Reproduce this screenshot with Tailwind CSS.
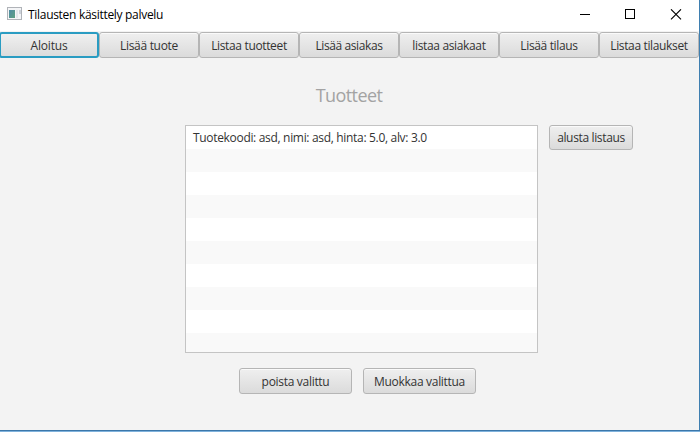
<!DOCTYPE html>
<html lang="fi">
<head>
<meta charset="utf-8">
<title>Tilausten käsittely palvelu</title>
<script src="https://cdn.jsdelivr.net/npm/@tailwindcss/browser@4"></script>
</head>
<body class="w-[700px] h-[432px] overflow-hidden bg-[#f3f3f3] font-['Open_Sans','Noto_Sans',sans-serif] text-[12px] text-[#333333]">
<div class="flex flex-col w-[700px] h-[432px] overflow-hidden">
  <div class="flex flex-1 min-h-0 w-full">
    <div class="flex flex-col w-[699px] shrink-0 overflow-hidden">
      <header class="flex h-[31px] shrink-0 bg-white items-center pl-[7px] text-black">
        <svg class="shrink-0 -mt-[3px]" width="16" height="14" viewBox="0 0 16 14">
          <defs><linearGradient id="g" x2="1" y2="1"><stop stop-color="#4f8ba5"/><stop offset="1" stop-color="#5da181"/></linearGradient></defs>
          <rect x=".5" y=".5" width="14" height="12" fill="#f4f5f7" stroke="#b0b3b8"/>
          <rect x="2" y="3" width="6" height="8" fill="url(#g)"/>
          <rect x="9" y="3" width="2" height="8" fill="#e3e7eb"/>
          <rect x="12" y="3" width="2" height="4" fill="#cdd2d9"/>
        </svg>
        <span class="ml-[5px] -mt-[2px] whitespace-nowrap tracking-[-0.3px]">Tilausten käsittely palvelu</span>
        <svg class="ml-auto mr-[16px] -mt-[2px] shrink-0" width="104" height="12" viewBox="0 0 104 12" fill="none" stroke="#000">
          <path d="M1 5.5H11M46.5 .5h9v9h-9z" shape-rendering="crispEdges"/>
          <path d="M92 .3l10 10M102 .3L92 10.3" stroke-width="1.1"/>
        </svg>
      </header>
      <nav class="flex -ml-px pt-px h-[27px] w-[700px] shrink-0">
        <button class="w-[100px] h-[26px] pt-px rounded-[3px] border-2 border-[#2a9cc2] bg-linear-to-b from-[#f0f0f0] to-[#dcdcdc] leading-[21px] tracking-[-0.2px] whitespace-nowrap">Aloitus</button>
        <button class="w-[100px] h-[26px] pt-px rounded-[3px] border border-[#b5b5b5] bg-linear-to-b from-[#efefef] to-[#dbdbdb] shadow-[inset_0_1px_0_#fafafa] leading-[23px] tracking-[-0.3px] whitespace-nowrap">Lisää tuote</button>
        <button class="w-[100px] h-[26px] pt-px rounded-[3px] border border-[#b5b5b5] bg-linear-to-b from-[#efefef] to-[#dbdbdb] shadow-[inset_0_1px_0_#fafafa] leading-[23px] tracking-[-0.35px] whitespace-nowrap">Listaa tuotteet</button>
        <button class="w-[100px] h-[26px] pt-px rounded-[3px] border border-[#b5b5b5] bg-linear-to-b from-[#efefef] to-[#dbdbdb] shadow-[inset_0_1px_0_#fafafa] leading-[23px] tracking-[-0.4px] whitespace-nowrap">Lisää asiakas</button>
        <button class="w-[100px] h-[26px] pt-px rounded-[3px] border border-[#b5b5b5] bg-linear-to-b from-[#efefef] to-[#dbdbdb] shadow-[inset_0_1px_0_#fafafa] leading-[23px] tracking-[-0.35px] whitespace-nowrap">listaa asiakaat</button>
        <button class="w-[100px] h-[26px] pt-px rounded-[3px] border border-[#b5b5b5] bg-linear-to-b from-[#efefef] to-[#dbdbdb] shadow-[inset_0_1px_0_#fafafa] leading-[23px] tracking-[-0.35px] whitespace-nowrap">Lisää tilaus</button>
        <button class="w-[100px] h-[26px] pt-px rounded-[3px] border border-[#b5b5b5] bg-linear-to-b from-[#efefef] to-[#dbdbdb] shadow-[inset_0_1px_0_#fafafa] leading-[23px] tracking-[-0.35px] whitespace-nowrap">Listaa tilaukset</button>
      </nav>
      <main class="flex flex-col">
        <h1 class="mt-[24px] h-[27px] w-[699px] pr-px text-center text-[18px] leading-[27px] tracking-[-0.6px] font-normal text-[#a3a3a3]">Tuotteet</h1>
        <div class="flex mt-[16px] ml-[185px] gap-[11px] items-start">
          <div class="w-[353px] h-[228px] border border-[#c4c4c4] bg-white overflow-hidden">
            <div class="h-[23px] pl-[7px] leading-[24px] tracking-[-0.32px] whitespace-nowrap">Tuotekoodi: asd, nimi: asd, hinta: 5.0, alv: 3.0</div>
            <div class="h-[23px] bg-[#f9f9f9]"></div><div class="h-[23px]"></div>
            <div class="h-[23px] bg-[#f9f9f9]"></div><div class="h-[23px]"></div>
            <div class="h-[23px] bg-[#f9f9f9]"></div><div class="h-[23px]"></div>
            <div class="h-[23px] bg-[#f9f9f9]"></div><div class="h-[23px]"></div>
            <div class="h-[23px] bg-[#f9f9f9]"></div>
          </div>
          <button class="w-[84px] h-[25px] pt-px rounded-[3px] border border-[#b5b5b5] bg-linear-to-b from-[#efefef] to-[#dbdbdb] shadow-[inset_0_1px_0_#fafafa] leading-[22px] tracking-[-0.35px] whitespace-nowrap">alusta listaus</button>
        </div>
        <div class="flex mt-[15px] ml-[239px] gap-[11px]">
          <button class="w-[113px] h-[26px] pt-px rounded-[3px] border border-[#b5b5b5] bg-linear-to-b from-[#efefef] to-[#dbdbdb] shadow-[inset_0_1px_0_#fafafa] leading-[24px] tracking-[-0.3px] whitespace-nowrap">poista valittu</button>
          <button class="w-[113px] h-[26px] pt-px rounded-[3px] border border-[#b5b5b5] bg-linear-to-b from-[#efefef] to-[#dbdbdb] shadow-[inset_0_1px_0_#fafafa] leading-[24px] tracking-[-0.3px] whitespace-nowrap">Muokkaa valittua</button>
        </div>
      </main>
    </div>
    <div class="w-px bg-[#3f7fb0]"></div>
  </div>
  <div class="h-px shrink-0 bg-[#3b77aa]"></div>
  <div class="h-px shrink-0 bg-[#7fb2dc]"></div>
</div>
</body>
</html>
